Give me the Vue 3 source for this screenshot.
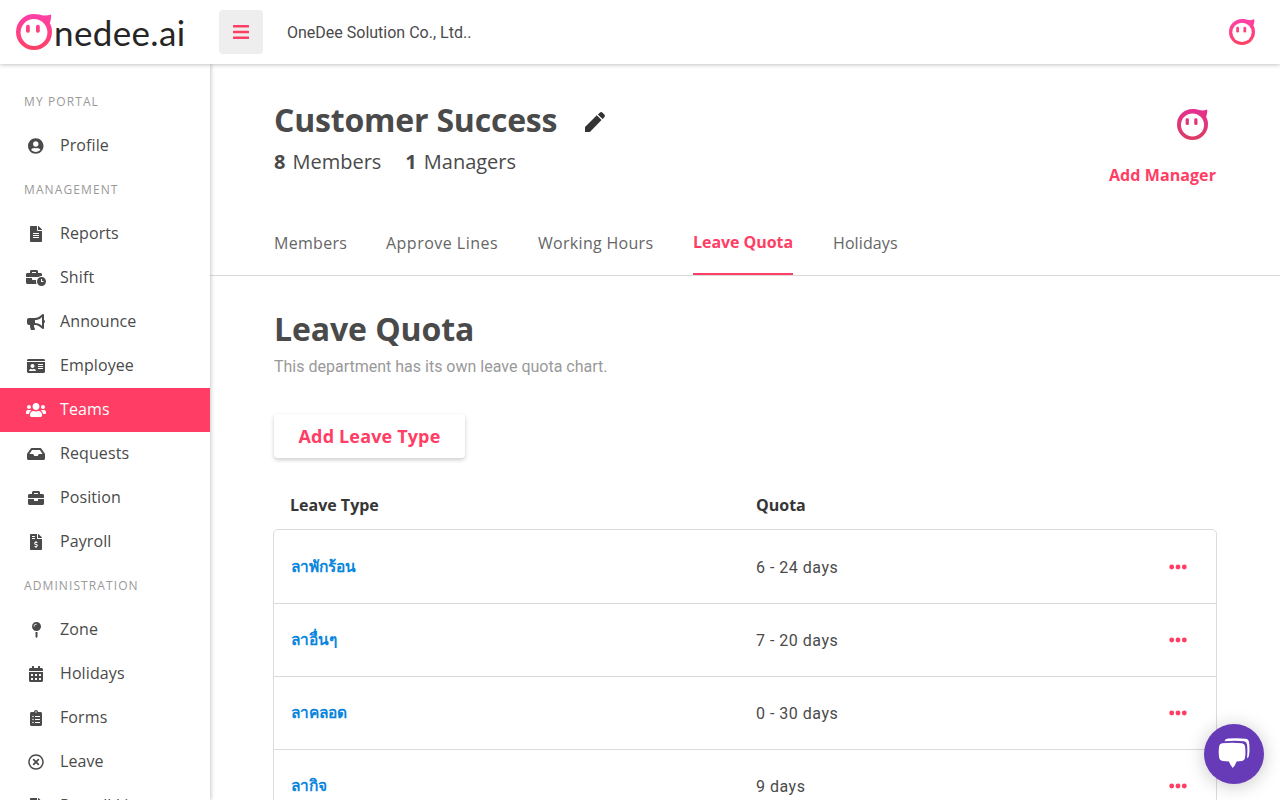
<script setup>
const icons = {
  profile: [496, 'M248 8C111 8 0 119 0 256s111 248 248 248 248-111 248-248S385 8 248 8zm0 96c48.600 0 88 39.400 88 88s-39.400 88-88 88-88-39.400-88-88 39.400-88 88-88zm0 344c-58.700 0-111.300-26.600-146.500-68.200 18.800-35.400 55.600-59.800 98.500-59.800 2.400 0 4.800.4 7.100 1.100 13 4.200 26.600 6.900 40.900 6.900 14.300 0 28-2.700 40.900-6.900 2.300-.7 4.700-1.100 7.100-1.100 42.900 0 79.700 24.400 98.500 59.800C359.300 421.400 306.700 448 248 448z'],
  file: [384, 'M224 136V0H24C10.700 0 0 10.700 0 24v464c0 13.300 10.700 24 24 24h336c13.300 0 24-10.700 24-24V160H248c-13.200 0-24-10.800-24-24zm64 236c0 6.600-5.400 12-12 12H108c-6.600 0-12-5.400-12-12v-8c0-6.600 5.400-12 12-12h168c6.600 0 12 5.400 12 12v8zm0-64c0 6.600-5.400 12-12 12H108c-6.600 0-12-5.400-12-12v-8c0-6.600 5.400-12 12-12h168c6.600 0 12 5.400 12 12v8zm0-72v8c0 6.600-5.400 12-12 12H108c-6.600 0-12-5.400-12-12v-8c0-6.600 5.400-12 12-12h168c6.600 0 12 5.400 12 12zm96-114.100v6.100H256V0h6.100c6.400 0 12.500 2.500 17 7l97.900 98c4.500 4.500 7 10.600 7 16.900z'],
  shift: [640, 'M496 224c-79.590 0-144 64.410-144 144s64.410 144 144 144 144-64.410 144-144-64.410-144-144-144zm64 150.290c0 5.340-4.370 9.710-9.710 9.710h-60.570c-5.340 0-9.710-4.370-9.710-9.710v-76.570c0-5.340 4.370-9.710 9.710-9.710h12.570c5.340 0 9.710 4.370 9.710 9.710V352h38.290c5.340 0 9.710 4.370 9.710 9.710v12.580zM496 192c5.400 0 10.720.330 16 .810V144c0-25.600-22.400-48-48-48h-80V48c0-25.600-22.400-48-48-48H176c-25.600 0-48 22.400-48 48v48H48c-25.600 0-48 22.400-48 48v80h395.120c28.600-20.090 63.350-32 100.880-32zM320 96H192V64h128v32zm6.820 224H208c-8.840 0-16-7.160-16-16v-48H0v144c0 25.600 22.400 48 48 48h291.430C327.100 423.960 320 396.820 320 368c0-16.660 2.480-32.720 6.820-48z'],
  announce: [576, 'M576 240c0-23.630-12.950-44.040-32-55.120V32.010C544 23.260 537.020 0 512 0c-7.120 0-14.190 2.380-19.980 7.020l-85.030 68.030C364.280 109.190 310.660 128 256 128H64c-35.350 0-64 28.650-64 64v96c0 35.350 28.650 64 64 64h33.700c-1.390 10.480-2.180 21.140-2.180 32 0 39.770 9.260 77.350 25.560 110.940 5.190 10.690 16.520 17.060 28.400 17.060h74.280c26.050 0 41.690-29.840 25.900-50.560-16.400-21.520-26.150-48.360-26.150-77.440 0-11.110 1.620-21.790 4.410-32H256c54.660 0 108.280 18.810 150.980 52.950l85.030 68.030a32.023 32.023 0 0 0 19.980 7.020c24.920 0 32-22.780 32-32V295.130C563.050 284.040 576 263.630 576 240zm-96 141.420l-33.050-26.440C392.950 311.780 325.120 288 256 288v-96c69.120 0 136.950-23.780 190.950-66.980L480 98.580v282.840z'],
  employee: [576, 'M528 32H48C21.500 32 0 53.500 0 80v16h576V80c0-26.500-21.500-48-48-48zM0 432c0 26.500 21.500 48 48 48h480c26.500 0 48-21.500 48-48V128H0v304zm352-232c0-4.400 3.600-8 8-8h144c4.400 0 8 3.600 8 8v16c0 4.400-3.600 8-8 8H360c-4.400 0-8-3.600-8-8v-16zm0 64c0-4.400 3.600-8 8-8h144c4.400 0 8 3.600 8 8v16c0 4.400-3.600 8-8 8H360c-4.400 0-8-3.600-8-8v-16zm0 64c0-4.400 3.600-8 8-8h144c4.400 0 8 3.600 8 8v16c0 4.400-3.600 8-8 8H360c-4.400 0-8-3.600-8-8v-16zM176 192c35.300 0 64 28.700 64 64s-28.700 64-64 64-64-28.700-64-64 28.700-64 64-64zM67.100 396.200C75.500 370.500 99.600 352 128 352h8.200c12.300 5.100 25.700 8 39.800 8s27.600-2.900 39.800-8h8.200c28.400 0 52.500 18.500 60.900 44.200 3.200 9.900-5.200 19.800-15.600 19.800H82.700c-10.400 0-18.800-10-15.600-19.800z'],
  teams: [640, 'M96 224c35.300 0 64-28.700 64-64s-28.700-64-64-64-64 28.700-64 64 28.700 64 64 64zm448 0c35.300 0 64-28.700 64-64s-28.700-64-64-64-64 28.700-64 64 28.700 64 64 64zm32 32h-64c-17.600 0-33.500 7.100-45.100 18.600 40.300 22.100 68.900 62 75.100 109.400h66c17.700 0 32-14.300 32-32v-32c0-35.300-28.700-64-64-64zm-256 0c61.900 0 112-50.100 112-112S381.900 32 320 32 208 82.100 208 144s50.100 112 112 112zm76.800 32h-8.300c-20.800 10-43.900 16-68.500 16s-47.600-6-68.500-16h-8.300C179.600 288 128 339.600 128 403.200V432c0 26.500 21.500 48 48 48h288c26.500 0 48-21.500 48-48v-28.800c0-63.600-51.600-115.200-115.200-115.200zm-223.700-13.400C161.500 263.100 145.600 256 128 256H64c-35.300 0-64 28.700-64 64v32c0 17.700 14.300 32 32 32h65.900c6.300-47.400 34.900-87.300 75.200-109.400z'],
  requests: [576, 'M567.938 243.908L462.250 85.374A48.003 48.003 0 0 0 422.311 64H153.689a48 48 0 0 0-39.938 21.374L8.062 243.908A47.994 47.994 0 0 0 0 270.533V400c0 26.510 21.490 48 48 48h480c26.510 0 48-21.490 48-48V270.533a47.994 47.994 0 0 0-8.062-26.625zM162.252 128h251.497l85.333 128H376l-32 64H232l-32-64H76.918l85.334-128z'],
  position: [512, 'M320 336c0 8.840-7.160 16-16 16h-96c-8.840 0-16-7.160-16-16v-48H0v144c0 25.600 22.400 48 48 48h416c25.600 0 48-22.400 48-48V288H320v48zm144-208h-80V80c0-25.600-22.400-48-48-48H176c-25.600 0-48 22.400-48 48v48H48c-25.600 0-48 22.400-48 48v80h512v-80c0-25.600-22.400-48-48-48zm-144 0H192V96h128v32z'],
  payroll: [384, 'M377 105L279.100 7c-4.500-4.500-10.600-7-17-7H256v128h128v-6.100c0-6.300-2.500-12.400-7-16.900zm-153 31V0H24C10.700 0 0 10.700 0 24v464c0 13.300 10.700 24 24 24h336c13.300 0 24-10.700 24-24V160H248c-13.200 0-24-10.800-24-24zM64 72c0-4.420 3.580-8 8-8h80c4.420 0 8 3.580 8 8v16c0 4.420-3.580 8-8 8H72c-4.420 0-8-3.580-8-8V72zm0 80v-16c0-4.420 3.580-8 8-8h80c4.420 0 8 3.580 8 8v16c0 4.420-3.580 8-8 8H72c-4.420 0-8-3.580-8-8zm144 263.880V440c0 4.420-3.580 8-8 8h-16c-4.420 0-8-3.580-8-8v-24.290c-11.290-.580-22.270-4.520-31.370-11.350-3.900-2.930-4.100-8.770-.570-12.140l11.750-11.210c2.770-2.640 6.890-2.760 10.130-.730 3.870 2.420 8.260 3.720 12.820 3.720h28.110c6.500 0 11.800-5.920 11.800-13.190 0-5.950-3.610-11.190-8.770-12.730l-45-13.500c-18.590-5.580-31.580-23.420-31.580-43.390 0-24.520 19.050-44.440 42.670-45.070V232c0-4.420 3.580-8 8-8h16c4.420 0 8 3.580 8 8v24.290c11.290.580 22.270 4.510 31.370 11.350 3.900 2.930 4.100 8.770.570 12.140l-11.750 11.210c-2.770 2.640-6.890 2.760-10.130.730-3.870-2.430-8.260-3.720-12.820-3.720h-28.110c-6.500 0-11.800 5.920-11.800 13.190 0 5.950 3.610 11.190 8.770 12.730l45 13.500c18.590 5.580 31.580 23.420 31.580 43.390 0 24.530-19.050 44.440-42.670 45.070z'],
  zone: [288, 'M112 316.940v156.690l22.020 33.020c4.750 7.120 15.220 7.120 19.970 0L176 473.630V316.940c-10.390 1.920-21.060 3.060-32 3.060s-21.610-1.140-32-3.060zM144 0C64.470 0 0 64.470 0 144s64.470 144 144 144 144-64.470 144-144S223.530 0 144 0zm0 76c-37.500 0-68 30.500-68 68 0 6.620-5.380 12-12 12s-12-5.380-12-12c0-50.730 41.280-92 92-92 6.620 0 12 5.380 12 12s-5.380 12-12 12z'],
  holidays: [448, 'M0 464c0 26.500 21.500 48 48 48h352c26.500 0 48-21.500 48-48V192H0v272zm320-196c0-6.600 5.400-12 12-12h40c6.600 0 12 5.400 12 12v40c0 6.600-5.400 12-12 12h-40c-6.600 0-12-5.400-12-12v-40zm0 128c0-6.600 5.400-12 12-12h40c6.600 0 12 5.400 12 12v40c0 6.600-5.400 12-12 12h-40c-6.600 0-12-5.400-12-12v-40zM192 268c0-6.600 5.400-12 12-12h40c6.600 0 12 5.400 12 12v40c0 6.600-5.400 12-12 12h-40c-6.600 0-12-5.400-12-12v-40zm0 128c0-6.600 5.400-12 12-12h40c6.600 0 12 5.400 12 12v40c0 6.600-5.400 12-12 12h-40c-6.600 0-12-5.400-12-12v-40zM64 268c0-6.600 5.400-12 12-12h40c6.600 0 12 5.400 12 12v40c0 6.600-5.400 12-12 12H76c-6.600 0-12-5.400-12-12v-40zm0 128c0-6.600 5.400-12 12-12h40c6.600 0 12 5.400 12 12v40c0 6.600-5.400 12-12 12H76c-6.600 0-12-5.400-12-12v-40zM400 64h-48V16c0-8.800-7.200-16-16-16h-32c-8.800 0-16 7.200-16 16v48H160V16c0-8.800-7.200-16-16-16h-32c-8.800 0-16 7.200-16 16v48H48C21.500 64 0 85.500 0 112v48h448v-48c0-26.500-21.500-48-48-48z'],
  forms: [384, 'M336 64h-80c0-35.300-28.700-64-64-64s-64 28.700-64 64H48C21.500 64 0 85.500 0 112v352c0 26.500 21.500 48 48 48h288c26.500 0 48-21.500 48-48V112c0-26.500-21.500-48-48-48zM96 424c-13.300 0-24-10.700-24-24s10.700-24 24-24 24 10.700 24 24-10.700 24-24 24zm0-96c-13.300 0-24-10.700-24-24s10.700-24 24-24 24 10.700 24 24-10.700 24-24 24zm0-96c-13.300 0-24-10.700-24-24s10.700-24 24-24 24 10.700 24 24-10.700 24-24 24zm96-192c13.300 0 24 10.700 24 24s-10.700 24-24 24-24-10.700-24-24 10.700-24 24-24zm128 368c0 4.400-3.600 8-8 8H168c-4.400 0-8-3.600-8-8v-16c0-4.400 3.600-8 8-8h144c4.400 0 8 3.600 8 8v16zm0-96c0 4.400-3.600 8-8 8H168c-4.400 0-8-3.600-8-8v-16c0-4.400 3.600-8 8-8h144c4.400 0 8 3.600 8 8v16zm0-96c0 4.400-3.600 8-8 8H168c-4.400 0-8-3.600-8-8v-16c0-4.400 3.600-8 8-8h144c4.400 0 8 3.600 8 8v16z'],
  leave: [512, 'M256 8C119 8 8 119 8 256s111 248 248 248 248-111 248-248S393 8 256 8zm0 448c-110.500 0-200-89.500-200-200S145.500 56 256 56s200 89.500 200 200-89.500 200-200 200zm101.800-262.200L295.600 256l62.200 62.200c4.700 4.700 4.700 12.300 0 17l-22.600 22.600c-4.700 4.700-12.300 4.700-17 0L256 295.600l-62.200 62.200c-4.700 4.700-12.300 4.700-17 0l-22.600-22.600c-4.700-4.700-4.700-12.300 0-17l62.200-62.200-62.200-62.200c-4.700-4.700-4.700-12.300 0-17l22.600-22.600c4.700-4.700 12.300-4.700 17 0l62.200 62.200 62.200-62.200c4.700-4.700 12.300-4.700 17 0l22.600 22.600c4.700 4.700 4.700 12.300 0 17z'],
}
const menu = [
  { section: 'MY PORTAL' },
  { label: 'Profile', icon: 'profile' },
  { section: 'MANAGEMENT' },
  { label: 'Reports', icon: 'file' },
  { label: 'Shift', icon: 'shift' },
  { label: 'Announce', icon: 'announce' },
  { label: 'Employee', icon: 'employee' },
  { label: 'Teams', icon: 'teams', active: true },
  { label: 'Requests', icon: 'requests' },
  { label: 'Position', icon: 'position' },
  { label: 'Payroll', icon: 'payroll' },
  { section: 'ADMINISTRATION' },
  { label: 'Zone', icon: 'zone' },
  { label: 'Holidays', icon: 'holidays' },
  { label: 'Forms', icon: 'forms' },
  { label: 'Leave', icon: 'leave' },
  { label: 'Payroll List', icon: 'payroll' },
]
const tabs = ['Members', 'Approve Lines', 'Working Hours', 'Leave Quota', 'Holidays']
const quotas = [
  ['ลาพักร้อน', '6 - 24 days'],
  ['ลาอื่นๆ', '7 - 20 days'],
  ['ลาคลอด', '0 - 30 days'],
  ['ลากิจ', '9 days'],
]
</script>

<template>
  <div class="page">
    <svg class="defs" width="0" height="0">
      <defs>
        <linearGradient id="brand" x1="0" y1="0" x2="0" y2="1">
          <stop offset="0" stop-color="#ff3fa8" />
          <stop offset="1" stop-color="#ff4163" />
        </linearGradient>
        <linearGradient id="brandDark" x1="0" y1="0" x2="0" y2="1">
          <stop offset="0" stop-color="#e42f90" />
          <stop offset="1" stop-color="#dc3d62" />
        </linearGradient>
        <symbol id="face" viewBox="0 0 36 36">
          <path d="M18 0c4 0 6.500.800 9 1.500 2.500.300 5.500 0 8-1 .5 2.500-.2 5.500-1.200 8.500C35.400 12 36 15 36 18a18 18 0 1 1-18-18z" />
          <circle cx="18" cy="18.500" r="13.400" fill="#fff" />
          <rect x="10" y="10.700" width="3.800" height="8" rx="1.700" />
          <rect x="20" y="10.700" width="3.800" height="8" rx="1.700" />
        </symbol>
      </defs>
    </svg>

    <header class="topbar">
      <div class="logo">
        <svg class="logo-mark" fill="url(#brand)"><use href="#face" /></svg>
        <span class="logo-text">nedee.ai</span>
      </div>
      <button class="burger">
        <svg width="16" height="14" viewBox="0 0 16 14" fill="#ff3d65"><rect width="16" height="2.600" rx=".5" /><rect y="5.700" width="16" height="2.600" rx=".5" /><rect y="11.400" width="16" height="2.600" rx=".5" /></svg>
      </button>
      <span class="company">OneDee Solution Co., Ltd..</span>
      <svg class="avatar" fill="url(#brand)"><use href="#face" /></svg>
    </header>

    <div class="body">
      <nav class="sidebar">
        <template v-for="(m, i) in menu" :key="i">
          <div v-if="m.section" class="section">{{ m.section }}</div>
          <div v-else class="item" :class="{ active: m.active }">
            <span class="icon"><svg :width="icons[m.icon][0] / 32" height="16" :viewBox="`0 0 ${icons[m.icon][0]} 512`"><path fill="currentColor" fill-rule="evenodd" :d="icons[m.icon][1]" /></svg></span>
            <span class="label">{{ m.label }}</span>
          </div>
        </template>
      </nav>

      <main class="main">
        <section class="team">
          <div>
            <div class="title-row">
              <h1>Customer Success</h1>
              <svg class="pen" viewBox="3 3 18 18"><path fill="#333" d="M3 16.600V21h4.400L17.900 10.300l-4.300-4.300L3 16.600zM20.400 7.700a2 2 0 0 0 0-2.500l-1.600-1.600a2 2 0 0 0-2.500 0l-1.700 1.600 4.200 4.200 1.600-1.700z" /></svg>
            </div>
            <div class="counts">
              <span><b>8</b>Members</span>
              <span><b>1</b>Managers</span>
            </div>
          </div>
          <div class="managers">
            <span class="manager"><svg fill="url(#brandDark)"><use href="#face" /></svg></span>
            <a>Add Manager</a>
          </div>
        </section>

        <div class="tabs">
          <a v-for="t in tabs" :key="t" :class="{ on: t === 'Leave Quota' }">{{ t }}</a>
        </div>

        <section class="quota">
          <h2>Leave Quota</h2>
          <p>This department has its own leave quota chart.</p>
          <button class="add">Add Leave Type</button>
          <div class="head"><span>Leave Type</span><span>Quota</span></div>
          <div class="table">
            <div v-for="q in quotas" :key="q[0]" class="row">
              <a>{{ q[0] }}</a>
              <span class="days">{{ q[1] }}</span>
              <svg width="18" height="6" viewBox="0 0 18 6" fill="#ff3d65"><circle cx="2.700" cy="3" r="2.450" /><circle cx="9" cy="3" r="2.450" /><circle cx="15.300" cy="3" r="2.450" /></svg>
            </div>
          </div>
        </section>
      </main>
    </div>

    <div class="chat">
      <svg width="32" height="32" viewBox="0 0 32 32" fill="#fff">
        <path d="M4 5.200Q14 4.200 24 5.200Q26.600 5.600 27 8Q27.900 14 27 20Q26.600 22.400 24 22.900L18.500 23.500Q17.800 26.500 14.800 30Q12 26.800 11 23.500L4.500 22.900Q1.700 22.500 1.200 20Q.2 14 1.200 8Q1.500 5.600 4 5.200z" />
        <path d="M6.500 3.300Q7 .9 10 .6Q19-.2 27.500.7Q30.600 1 31 4Q32 11 31 17.500Q30.700 19.500 29 20.200Q29.800 12 29 6.500Q28.600 3.800 26 3.300Q17 2.300 6.500 3.300z" />
      </svg>
    </div>
  </div>
</template>

<style>
html, body { overflow: hidden; background: #fff; }
</style>

<style scoped>
* { box-sizing: border-box; }
.page { height: 800px; display: flex; flex-direction: column; overflow: hidden; background: #fff; color: #4a4a4a; font: 16px/24px "Open Sans", "Liberation Sans", sans-serif; position: relative; }
.defs { position: absolute; }
button { border: 0; padding: 0; font: inherit; }
.topbar { height: 64px; flex: none; display: flex; align-items: center; padding: 0 25px 0 16px; background: #fff; box-shadow: 0 1px 4px rgba(0, 0, 0, .24); position: relative; z-index: 2; }
.logo { display: flex; width: 203px; align-items: center; }
.logo-mark { width: 36px; height: 36px; flex: none; }
.logo-text { font-family: Lato, sans-serif; font-size: 35px; line-height: 44px; color: #262626; letter-spacing: .35px; margin: -1px 0 0 2px; }
.burger { width: 44px; height: 44px; border-radius: 4px; background: #eee; display: flex; align-items: center; justify-content: center; }
.company { font-family: Roboto, sans-serif; margin: 1px auto 0 24px; }
.avatar { width: 26px; height: 26px; }
.body { flex: 1; min-height: 0; display: flex; }
.sidebar { width: 210px; flex: none; padding-top: 16px; background: #fff; box-shadow: 1px 0 4px rgba(0, 0, 0, .22); z-index: 1; }
.section { height: 44px; padding-left: 24px; line-height: 43px; font-size: 12px; letter-spacing: 1.100px; color: #999; }
.item { height: 44px; display: flex; align-items: center; padding-left: 24px; letter-spacing: .1px; }
.label { margin-top: -2px; }
.item.active { background: #ff3d65; color: #fff; }
.icon { width: 24px; margin-right: 12px; display: flex; justify-content: center; }
.main { flex: 1; min-width: 0; }
.team { height: 148px; padding: 37px 64px 0; display: flex; justify-content: space-between; }
.title-row { display: flex; align-items: center; gap: 28px; height: 40px; }
h1, h2 { margin: 0; font-size: 32px; line-height: 40px; font-weight: 700; letter-spacing: -.2px; }
h1 { margin-top: -2px; }
.pen { width: 20px; height: 20px; margin-top: 2px; }
.counts { display: flex; gap: 24px; margin-top: 5px; font-size: 20px; line-height: 32px; }
.counts b { margin-right: 7px; }
.managers { display: flex; flex-direction: column; align-items: flex-end; }
.manager { width: 40px; height: 40px; margin: 3px 4px 0 0; display: flex; align-items: center; justify-content: center; border-radius: 50%; }
.manager svg { width: 31px; height: 31px; }
.managers a { margin-top: 19px; color: #ff3d65; font-weight: 700; letter-spacing: .080px; }
.tabs { height: 64px; padding: 0 64px; display: grid; grid-template-columns: 72px 112px 115px 100px 65px; gap: 40px; border-bottom: 1px solid #dbdbdb; line-height: 62px; color: #666; letter-spacing: .3px; white-space: nowrap; }
.tabs a:nth-child(2) { letter-spacing: .48px; }
.tabs a:nth-child(5) { letter-spacing: .1px; }
.tabs .on { color: #ff3d65; font-weight: 700; letter-spacing: -.050px; line-height: 60px; border-bottom: 2px solid #ff3d65; }
.quota { padding: 34px 63px 0; }
.quota h2, .quota p, .add { margin-left: 1px; }
.quota h2 { letter-spacing: -.100px; margin-top: -1px; }
.quota p { margin-top: 6px; margin-bottom: 35px; color: #999; font-family: Roboto, sans-serif; }
.add { width: 191px; height: 44px; background: #fff; border-radius: 4px; box-shadow: 0 2px 4px rgba(0, 0, 0, .2); color: #ff3d65; font-size: 18px; font-weight: 700; letter-spacing: .150px; padding-bottom: 1px; }
.head, .row { display: grid; grid-template-columns: 466px 1fr auto; align-items: center; }
.head { padding: 0 17px; margin-top: 35px; margin-bottom: 12px; color: #363636; font-weight: 700; }
.table { border: 1px solid #dbdbdb; border-radius: 5px; }
.row { height: 73px; padding: 0 29px 0 17px; grid-template-columns: 465px 1fr auto; border-bottom: 1px solid #dbdbdb; }
.row:first-child { height: 74px; }
.row a { color: #0a86dd; font-weight: 700; font-size: 15.500px; margin-top: -2px; }
.days { color: #4a4a4a; font-family: Roboto, sans-serif; letter-spacing: .5px; margin-top: 2px; }
.chat { position: absolute; left: 1204px; top: 724px; width: 60px; height: 60px; border-radius: 50%; background: #673ab7; display: flex; align-items: center; justify-content: center; box-shadow: 0 2px 18px rgba(0, 0, 0, .22); z-index: 3; }
</style>
